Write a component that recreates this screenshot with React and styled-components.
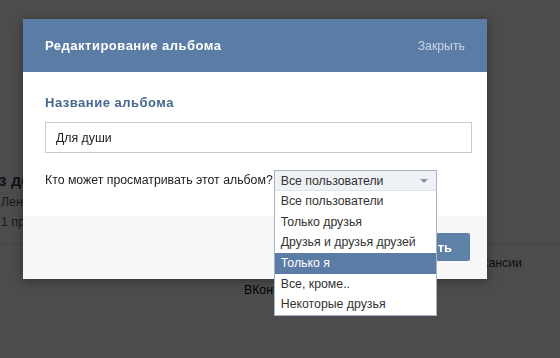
import React from "react";
import styled, { createGlobalStyle } from "styled-components";

const Global = createGlobalStyle`
  html, body {
    margin: 0;
    padding: 0;
    width: 560px;
    height: 358px;
    overflow: hidden;
    background: #fff;
    font-family: "Liberation Sans", Arial, sans-serif;
    font-size: 12.3px;
  }
`;

const privacy = [
  "Все пользователи",
  "Только друзья",
  "Друзья и друзья друзей",
  "Только я",
  "Все, кроме..",
  "Некоторые друзья",
];

export default function App() {
  return (
    <>
      <Global />
      <Page>
        <AlbumInfo>
          <AlbumTitle>Из дома</AlbumTitle>
          <AlbumLine>Ленинград</AlbumLine>
          <AlbumLine>1 просмотр</AlbumLine>
        </AlbumInfo>
        <FooterLinks>
          <span>о сайте</span>
          <span>помощь</span>
          <span>правила</span>
          <span>реклама</span>
          <span>разработчикам</span>
          <span>вакансии</span>
        </FooterLinks>
        <Copyright>ВКонтакте © 2013</Copyright>
      </Page>
      <Overlay />
      <Box>
        <Header>
          <HeaderTitle>Редактирование альбома</HeaderTitle>
          <CloseLink>Закрыть</CloseLink>
        </Header>
        <Body>
          <FieldTitle>Название альбома</FieldTitle>
          <Input defaultValue="Для души" />
          <PrivacyRow>
            <span>Кто может просматривать этот альбом?</span>
            <Select>
              <SelectHead>
                <span>Все пользователи</span>
                <Arrow />
              </SelectHead>
              <Options>
                {privacy.map((p, i) => (
                  <Option key={p} $active={i === 3}>
                    {p}
                  </Option>
                ))}
              </Options>
            </Select>
          </PrivacyRow>
        </Body>
        <Footer>
          <Button>Сохранить</Button>
        </Footer>
      </Box>
    </>
  );
}

const Page = styled.div`
  height: 358px;
  padding-top: 170px;
  box-sizing: border-box;
  color: #555;
`;

const AlbumInfo = styled.div`
  padding: 0 0 12px 1px;
  border-bottom: 1px solid #dae1e8;
`;

const AlbumTitle = styled.div`
  margin-left: -14px;
  font-weight: bold;
  font-size: 16px;
  line-height: 22px;
  color: #2b3d52;
`;

const AlbumLine = styled.div`
  line-height: 20px;
  color: #555;
`;

const FooterLinks = styled.div`
  display: flex;
  justify-content: flex-end;
  gap: 12px;
  padding: 10px 38px 0 0;
  line-height: 16px;
  color: #333;
`;

const Copyright = styled.div`
  margin-top: 11px;
  padding-left: 244px;
  color: #000;
  line-height: 16px;
`;

const Overlay = styled.div`
  position: fixed;
  inset: 0;
  background: rgba(0, 0, 0, 0.7);
`;

const Box = styled.div`
  position: absolute;
  left: 23px;
  top: 19px;
  width: 464px;
  background: #fff;
  box-shadow: 0 2px 10px rgba(0, 0, 0, 0.35);
`;

const Header = styled.div`
  height: 53px;
  padding: 0 22px;
  display: flex;
  align-items: center;
  justify-content: space-between;
  background: #5b7ca5;
`;

const HeaderTitle = styled.div`
  color: #fff;
  font-weight: bold;
  font-size: 13px;
  letter-spacing: 0.5px;
`;

const CloseLink = styled.div`
  color: #c9d6e6;
`;

const Body = styled.div`
  padding: 22px 15px 26px 22px;
`;

const FieldTitle = styled.div`
  color: #45688e;
  font-weight: bold;
  font-size: 13px;
  letter-spacing: 0.5px;
  line-height: 18px;
`;

const Input = styled.input`
  display: block;
  box-sizing: border-box;
  width: 427px;
  height: 31px;
  margin-top: 10px;
  padding: 0 10px;
  border: 1px solid #c5ccd4;
  font-family: inherit;
  font-size: 12.3px;
  color: #222;
  outline: none;
`;

const PrivacyRow = styled.div`
  display: flex;
  align-items: center;
  gap: 1px;
  margin-top: 17px;
  color: #222;
  line-height: 20px;
`;

const Select = styled.div`
  position: relative;
  width: 163px;
`;

const SelectHead = styled.div`
  box-sizing: border-box;
  height: 20px;
  padding: 0 8px 0 6px;
  display: flex;
  align-items: center;
  justify-content: space-between;
  background: #eef1f5;
  border: 1px solid #a6b4c4;
  border-bottom: none;
  color: #333;
`;

const Arrow = styled.i`
  width: 0;
  height: 0;
  border-left: 4px solid transparent;
  border-right: 4px solid transparent;
  border-top: 4px solid #8c96a2;
`;

const Options = styled.div`
  position: absolute;
  top: 20px;
  left: 0;
  width: 163px;
  box-sizing: border-box;
  background: #fff;
  border: 1px solid #a6b4c4;
  border-top: 1px solid #dfe4ea;
  z-index: 2;
`;

const Option = styled.div`
  height: 20.7px;
  line-height: 20.7px;
  padding: 0 6px;
  white-space: nowrap;
  color: ${(p) => (p.$active ? "#fff" : "#333")};
  background: ${(p) => (p.$active ? "#5b7ca5" : "transparent")};
`;

const Footer = styled.div`
  height: 63px;
  padding: 17px 17px 0 0;
  box-sizing: border-box;
  display: flex;
  justify-content: flex-end;
  align-items: flex-start;
  background: #f7f7f7;
`;

const Button = styled.button`
  height: 28px;
  padding: 0 18px;
  border: none;
  border-radius: 2px;
  background: #5e81a8;
  color: #fff;
  font-family: inherit;
  font-weight: bold;
  font-size: 13px;
`;
